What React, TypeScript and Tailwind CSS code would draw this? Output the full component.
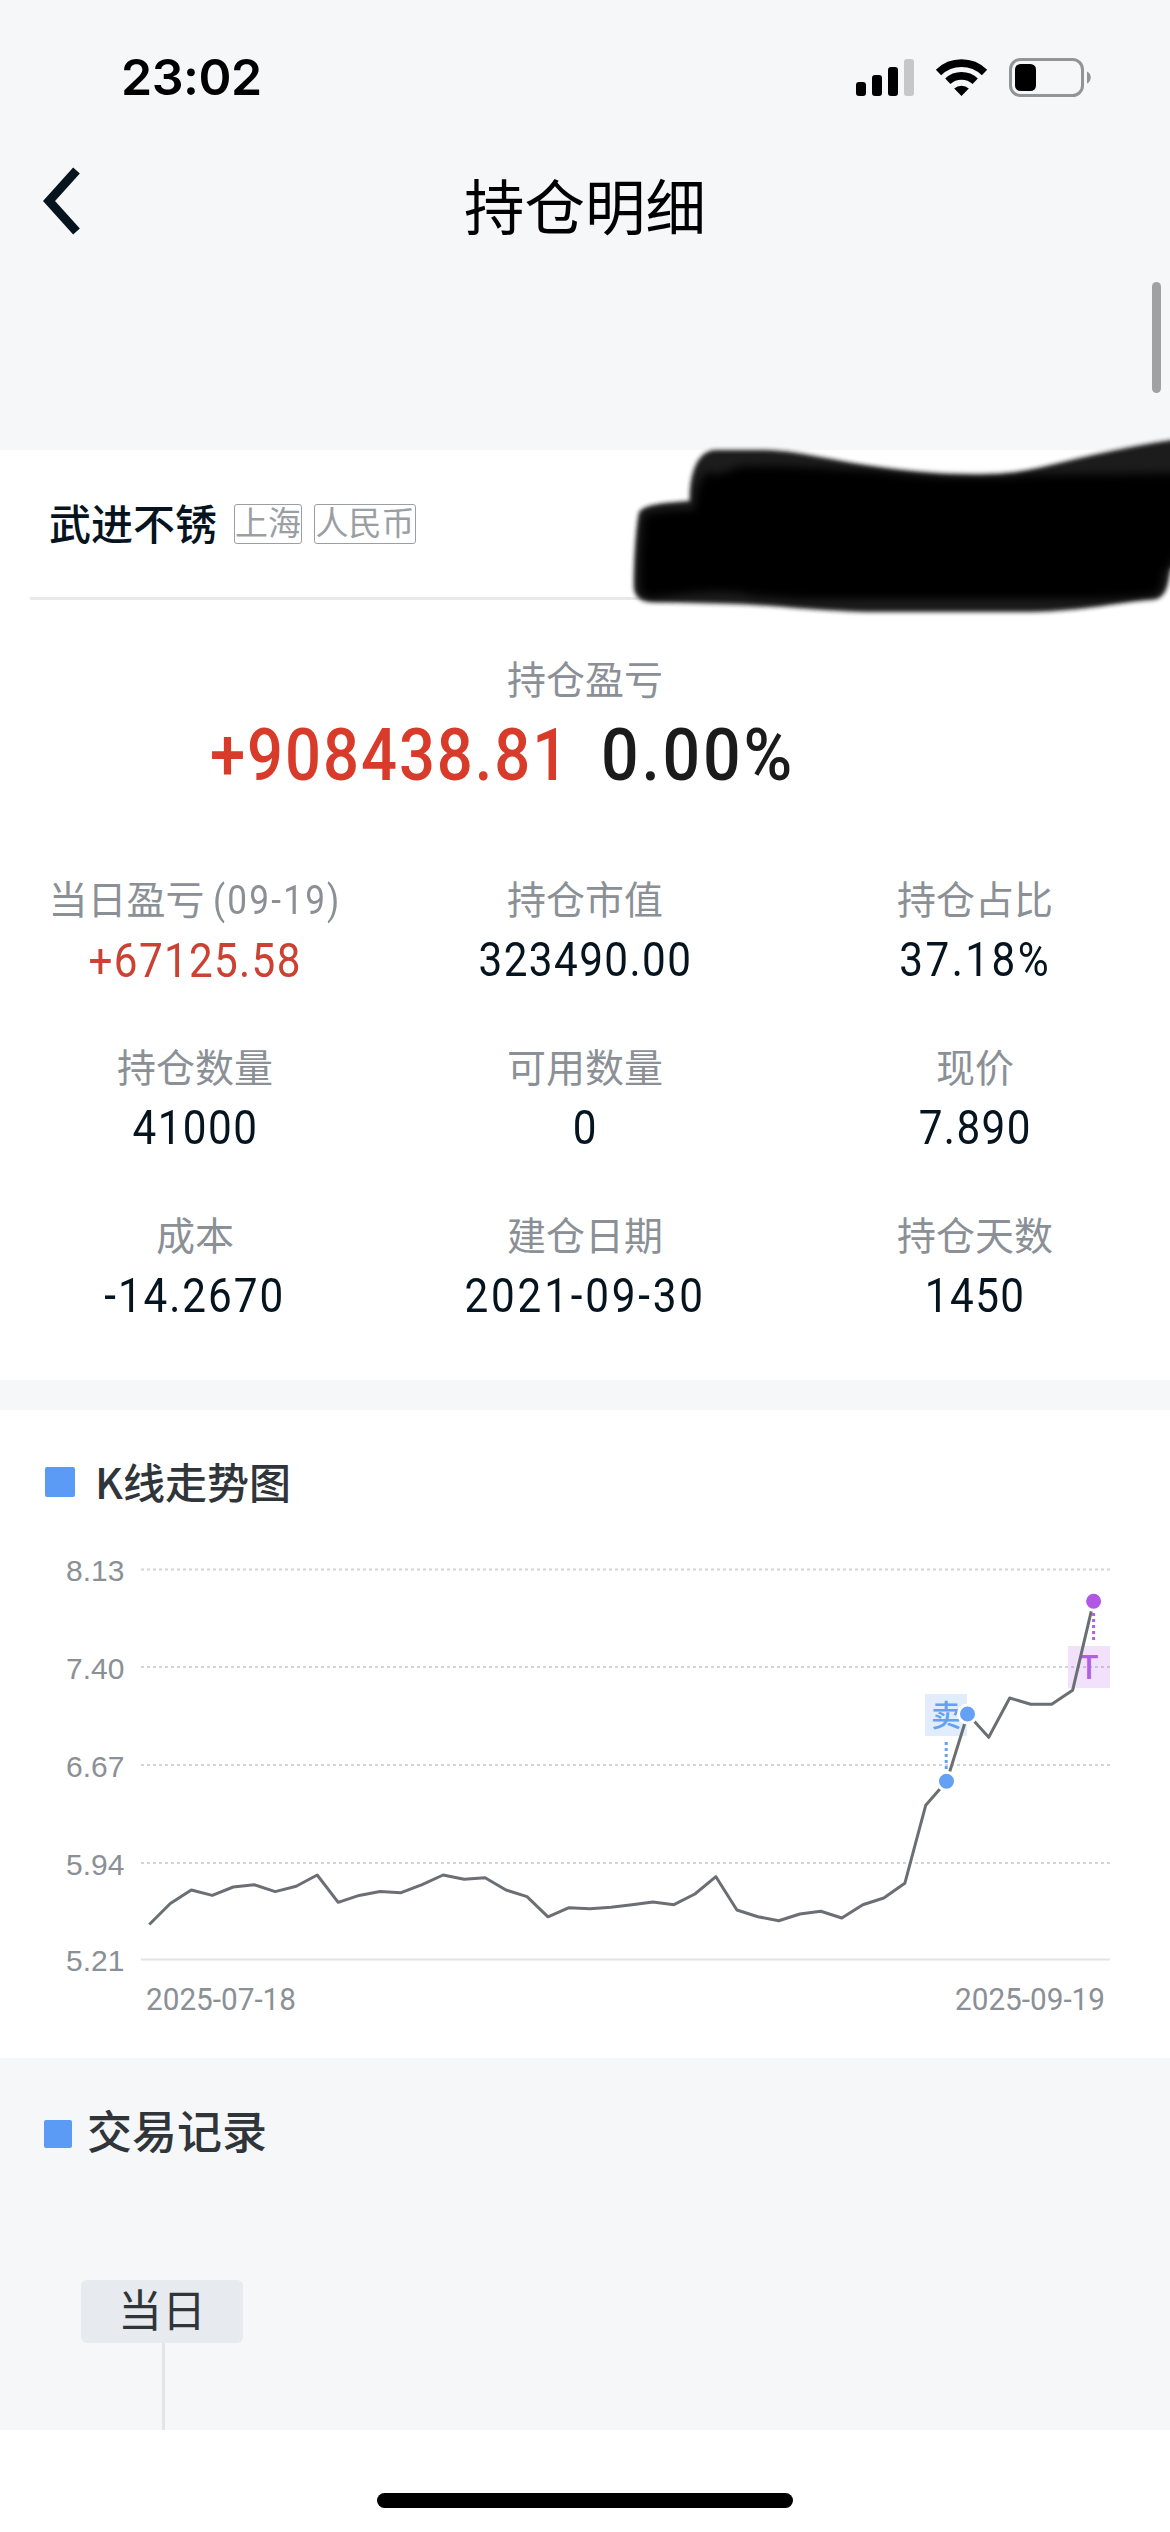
import React from 'react';

type Stat = {
    label: string;
    date?: string;
    value: string;
    tone?: string;
};

const stats: Stat[] = [
    { label: '当日盈亏', date: '(09-19)', value: '+67125.58', tone: 'text-[#cb4132] tracking-[1.5px] pt-[1px]' },
    { label: '持仓市值', value: '323490.00' },
    { label: '持仓占比', value: '37.18%', tone: 'text-[#05141e] tracking-[2.8px]' },
    { label: '持仓数量', value: '41000' },
    { label: '可用数量', value: '0' },
    { label: '现价', value: '7.890' },
    { label: '成本', value: '-14.2670', tone: 'text-[#05141e] tracking-[2.2px]' },
    { label: '建仓日期', value: '2021-09-30', tone: 'text-[#05141e] tracking-[3.2px]' },
    { label: '持仓天数', value: '1450' },
];

const axis = [
    { label: '8.13', y: 29.5 },
    { label: '7.40', y: 127 },
    { label: '6.67', y: 225 },
    { label: '5.94', y: 323 },
    { label: '5.21', y: 419.5 },
];

// y position of each close on the chart, one trading day per step
const closes = [
    384.5, 363.5, 350, 355.4, 347, 344.7, 351.6, 346.2, 335, 362.3, 355.4, 351.6, 352.7, 344.7, 335, 339.3,
    337.8, 350, 356.6, 376.8, 367.7, 368.7, 367.3, 364.7, 362, 364.7, 354, 336.7, 370, 376.7, 380.7, 374,
    371.3, 378, 364.7, 358, 343.3, 265.3, 241.3, 174, 197.3, 158, 164.3, 164.3, 150.3, 61.3,
];
const START_X = 149.3;
const STEP_X = 20.985;

function StatusBar() {
    return (
        <div className="flex h-[156px] items-start justify-between pl-[121px] pr-[78px] pt-[57px]">
            <span className="font-['Inter',sans-serif] text-[50px] font-semibold leading-[41px] tracking-[-0.5px] text-black">
                23:02
            </span>
            <svg width="236" height="41" viewBox="856 57 236 41">
                <rect x="856" y="82" width="10" height="14" rx="3" />
                <rect x="872" y="75" width="10" height="21" rx="3" />
                <rect x="888" y="67" width="10" height="29" rx="3" />
                <rect x="904" y="59" width="10" height="37" rx="3" fill="#c6c7c9" />
                <g fill="none" stroke="#000" strokeWidth="7.6">
                    <path d="M938.5 72.5 A33 33 0 0 1 984.5 72.5" />
                    <path d="M947.8 81.3 A20 20 0 0 1 975.2 81.3" />
                </g>
                <path d="M961.5 96 L954.2 88.6 A10.5 10.5 0 0 1 968.8 88.6 Z" />
                <rect x="1010.5" y="59.5" width="72" height="36" rx="10" fill="none" stroke="#939496" strokeWidth="3" />
                <rect x="1015" y="64" width="21" height="27" rx="5.5" />
                <path d="M1087 71.5 C1092 73.5 1092 81.5 1087 83.5 Z" fill="#939496" />
            </svg>
        </div>
    );
}

function NavBar() {
    return (
        <div className="relative flex h-[294px] justify-center">
            <svg className="absolute left-[43px] top-[10px]" width="38" height="70" viewBox="0 0 38 70">
                <path d="M33.5 4.5 L6 35 L33.5 65.5" fill="none" stroke="#05141e" strokeWidth="9" />
            </svg>
            <h1 className="h-[60px] pt-[18px] text-[60.5px] leading-[60px] text-black">持仓明细</h1>
            <div className="absolute right-[9px] top-[126px] h-[111px] w-[9px] rounded-full bg-[#a0a1a3]" />
        </div>
    );
}

// Marker strokes hiding the account details
function Scribble() {
    return (
        <svg className="absolute -right-[30px] -top-5" width="550" height="190" viewBox="620 430 550 190">
            <defs>
                <filter id="soft" x="-5%" y="-10%" width="110%" height="120%">
                    <feGaussianBlur stdDeviation="2" />
                </filter>
                <filter id="softer" x="-5%" y="-10%" width="110%" height="120%">
                    <feGaussianBlur stdDeviation="4" />
                </filter>
            </defs>
            <path
                filter="url(#soft)"
                fill="#1e1e1e"
                d="M634 588 C634 560 636 530 639 513 C643 504 665 503 690 501 C689 475 697 450 716 450 L765 450 C800 451 830 460 883 468 C930 475 990 478 1025 471 C1070 461 1120 447 1180 439 L1180 555 L1170 570 C1168 585 1166 596 1156 599 C1120 601 1090 611 1030 612 L865 612 C820 611 770 605 734 604 L655 602 C641 602 635 597 634 588 Z"
            />
            <path
                filter="url(#softer)"
                d="M640 588 C639 560 642 530 644 516 C655 509 675 511 695 509 C695 492 699 480 707 472 C725 478 728 467 745 466 C800 465 840 470 883 472 C930 478 990 480 1025 475 L1180 473 L1180 550 L1163 575 C1163 588 1160 593 1150 596 L1100 599 L800 599 L755 596 C735 590 700 591 660 597 C648 599 641 597 640 588 Z"
            />
        </svg>
    );
}

function StockHeader() {
    return (
        <div className="relative mx-[30px] flex h-[150px] items-center border-b-[3px] border-[#e9e9ea] pl-[19px]">
            <span className="pb-[3px] text-[42px] font-medium leading-[42px] text-[#05141e]">武进不锈</span>
            <span className="ml-[17px] flex h-10 w-[68px] justify-center whitespace-nowrap rounded-[3px] border-[1.5px] border-[#9a9fa4] text-[33px] leading-[33px] text-[#9a9fa4]">
                上海
            </span>
            <span className="ml-3 flex h-10 w-[102px] justify-center whitespace-nowrap rounded-[3px] border-[1.5px] border-[#9a9fa4] text-[33px] leading-[33px] text-[#9a9fa4]">
                人民币
            </span>
            <Scribble />
        </div>
    );
}

function StatCell({ stat }: { stat: Stat }) {
    return (
        <div className="flex h-[168px] flex-col items-center">
            <div className="flex h-[58px] items-center pb-1 text-[39px] leading-[54px] text-[#8b9096]">
                {stat.label}
                {stat.date && (
                    <span className="-mr-[18px] ml-[9px] origin-left scale-x-[0.88] pt-2 font-['Roboto',sans-serif] text-[40px] tracking-[2.5px]">
                        {stat.date}
                    </span>
                )}
            </div>
            <span
                className={`mt-[2px] scale-x-[0.88] font-['Roboto',sans-serif] text-[48px] leading-[60px] ${
                    stat.tone ?? 'text-[#05141e] tracking-[1.6px]'
                }`}
            >
                {stat.value}
            </span>
        </div>
    );
}

function TrendChart() {
    const points = closes.map((y, i) => `${(START_X + i * STEP_X).toFixed(1)},${y}`).join(' ');

    return (
        <svg width="1170" height="490" viewBox="0 0 1170 490">
            {axis.map((tick, i) => (
                <g key={tick.label}>
                    <text x="66" y={tick.y + 11.5} fontSize="30" fill="#8b9096" className="font-['Liberation_Sans',sans-serif]">
                        {tick.label}
                    </text>
                    <line
                        x1="141"
                        x2="1110"
                        y1={tick.y}
                        y2={tick.y}
                        stroke={i === axis.length - 1 ? '#e2e3e4' : '#d3d4d6'}
                        strokeWidth="2"
                        strokeDasharray={i === axis.length - 1 ? undefined : '3 3'}
                    />
                </g>
            ))}

            {/* T trade */}
            <rect x="1068" y="106" width="42" height="42" fill="#af5ae6" fillOpacity="0.18" />
            <text x="1089" y="138.5" fontSize="32" textAnchor="middle" fill="#b25fe0" className="font-medium">T</text>

            {/* sell */}
            <rect x="925" y="154" width="42" height="42" fill="#5b9bf5" fillOpacity="0.18" />
            <text x="946" y="186" fontSize="30" textAnchor="middle" fill="#64a1f4" className="font-medium">卖</text>

            <polyline points={points} fill="none" stroke="#6b6f74" strokeWidth="3" strokeLinejoin="round" />

            <line x1="946.2" x2="946.2" y1="202" y2="231" stroke="#64a1f4" strokeWidth="3" strokeDasharray="3 3" />
            <line x1="1093.6" x2="1093.6" y1="73" y2="102" stroke="#b25fe0" strokeWidth="3" strokeDasharray="3 3" />
            <circle cx="967.5" cy="174" r="9" fill="#64a1f4" stroke="#fff" strokeWidth="3" />
            <circle cx="946.5" cy="241.3" r="9" fill="#64a1f4" stroke="#fff" strokeWidth="3" />
            <circle cx="1093.6" cy="61.3" r="9" fill="#b058e3" stroke="#fff" strokeWidth="3" />

            <g fontSize="31" fill="#8b9096" className="font-['Roboto',sans-serif]">
                <text x="146" y="470" textLength="150" lengthAdjust="spacingAndGlyphs">2025-07-18</text>
                <text x="955" y="470" textLength="150" lengthAdjust="spacingAndGlyphs">2025-09-19</text>
            </g>
        </svg>
    );
}

export default function App() {
    return (
        <div className="flex h-[2532px] w-[1170px] flex-col overflow-hidden bg-[#f6f7f9] font-['Noto_Sans_CJK_SC',sans-serif]">
            <StatusBar />
            <NavBar />

            <section className="h-[930px] bg-white">
                <StockHeader />
                <p className="mt-[48px] text-center text-[39px] leading-[58px] text-[#8b9096]">持仓盈亏</p>
                <div className="mt-1 flex h-[92px] items-center pl-[210px] font-['Roboto',sans-serif] text-[72px] font-medium leading-[92px]">
                    <span className="w-[391px] origin-left scale-x-[0.88] tracking-[2.2px] text-[#d83b29]">+908438.81</span>
                    <span className="origin-left scale-x-[0.92] tracking-[3px] text-[#1b1b1b]">0.00%</span>
                </div>
                <div className="mt-[68px] grid grid-cols-3">
                    {stats.map((stat) => (
                        <StatCell key={stat.label} stat={stat} />
                    ))}
                </div>
            </section>

            <section className="mt-[30px] h-[648px] bg-white">
                <div className="flex h-[130px] items-center pl-[45px] pt-[14px]">
                    <i className="h-[30px] w-[30px] rounded-[2px] bg-[#5b9bf5]" />
                    <h2 className="ml-[20px] pb-[2px] text-[42px] font-medium leading-[60px] text-[#30353a]">K线走势图</h2>
                </div>
                <TrendChart />
            </section>

            <section className="h-[372px]">
                <div className="flex h-[148px] items-center pl-[44px]">
                    <i className="mt-1 h-7 w-7 rounded-[2px] bg-[#5b9bf5]" />
                    <h2 className="ml-[15px] pb-[5px] text-[45px] font-medium leading-[60px] text-[#30353a]">交易记录</h2>
                </div>
                <div className="ml-[81px] mt-[74px] flex w-[162px] flex-col items-center">
                    <span className="h-[63px] w-full rounded-md bg-[#e7eaee] text-center text-[44px] leading-[56px] text-[#30353a]">
                        当日
                    </span>
                    <div className="ml-[3px] h-[87px] w-[3px] bg-[#e2e4e8]" />
                </div>
            </section>

            <footer className="flex h-[102px] justify-center bg-white pt-[63px]">
                <div className="h-[15px] w-[416px] rounded-full bg-black" />
            </footer>
        </div>
    );
}
